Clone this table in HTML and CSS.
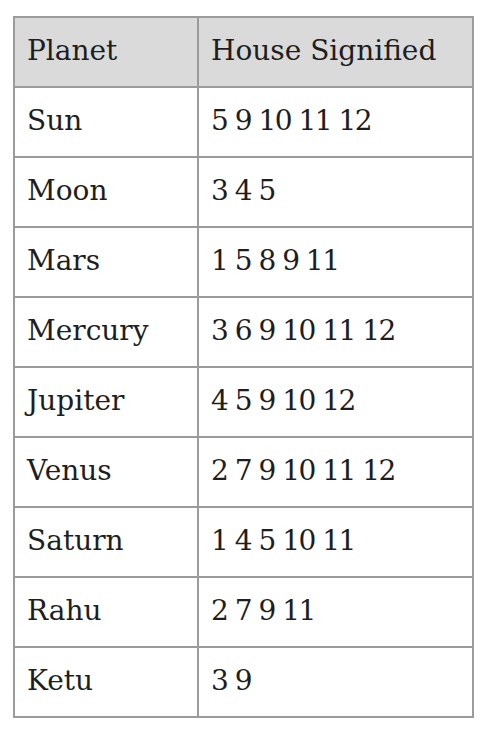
FILE: index.html
```html
<!DOCTYPE html>
<html>
<head>
<meta charset="utf-8">
<link rel="stylesheet" href="styles.css">
</head>
<body>
<table class="houses">
  <thead>
    <tr><th class="col-planet">Planet</th><th>House Signified</th></tr>
  </thead>
  <tbody>
    <tr><td>Sun</td><td class="nums">5 9 10 11 12</td></tr>
    <tr><td>Moon</td><td class="nums">3 4 5</td></tr>
    <tr><td>Mars</td><td class="nums">1 5 8 9 11</td></tr>
    <tr><td>Mercury</td><td class="nums">3 6 9 10 11 12</td></tr>
    <tr><td>Jupiter</td><td class="nums">4 5 9 10 12</td></tr>
    <tr><td>Venus</td><td class="nums">2 7 9 10 11 12</td></tr>
    <tr><td>Saturn</td><td class="nums">1 4 5 10 11</td></tr>
    <tr><td>Rahu</td><td class="nums">2 7 9 11</td></tr>
    <tr><td>Ketu</td><td class="nums">3 9</td></tr>
  </tbody>
</table>
</body>
</html>
```
FILE: styles.css
```css
html, body {
  margin: 0;
  padding: 0;
  background: #ffffff;
}
body {
  font-family: "DejaVu Serif", "Liberation Serif", serif;
  color: #1e1e1e;
}
.houses {
  border-collapse: collapse;
  margin: 16px 0 0 13px;
  width: 461px;
  table-layout: fixed;
}
.houses th,
.houses td {
  border: 2px solid #9b9b9b;
  height: 70px;
  padding: 0 12px 3px 12px;
  text-align: left;
  vertical-align: middle;
  font-size: 28px;
  font-weight: normal;
  line-height: 1;
  box-sizing: border-box;
}
.houses th {
  background: #dadada;
}
.houses .nums {
  letter-spacing: -1.5px;
}
.col-planet {
  width: 184px;
}
```
